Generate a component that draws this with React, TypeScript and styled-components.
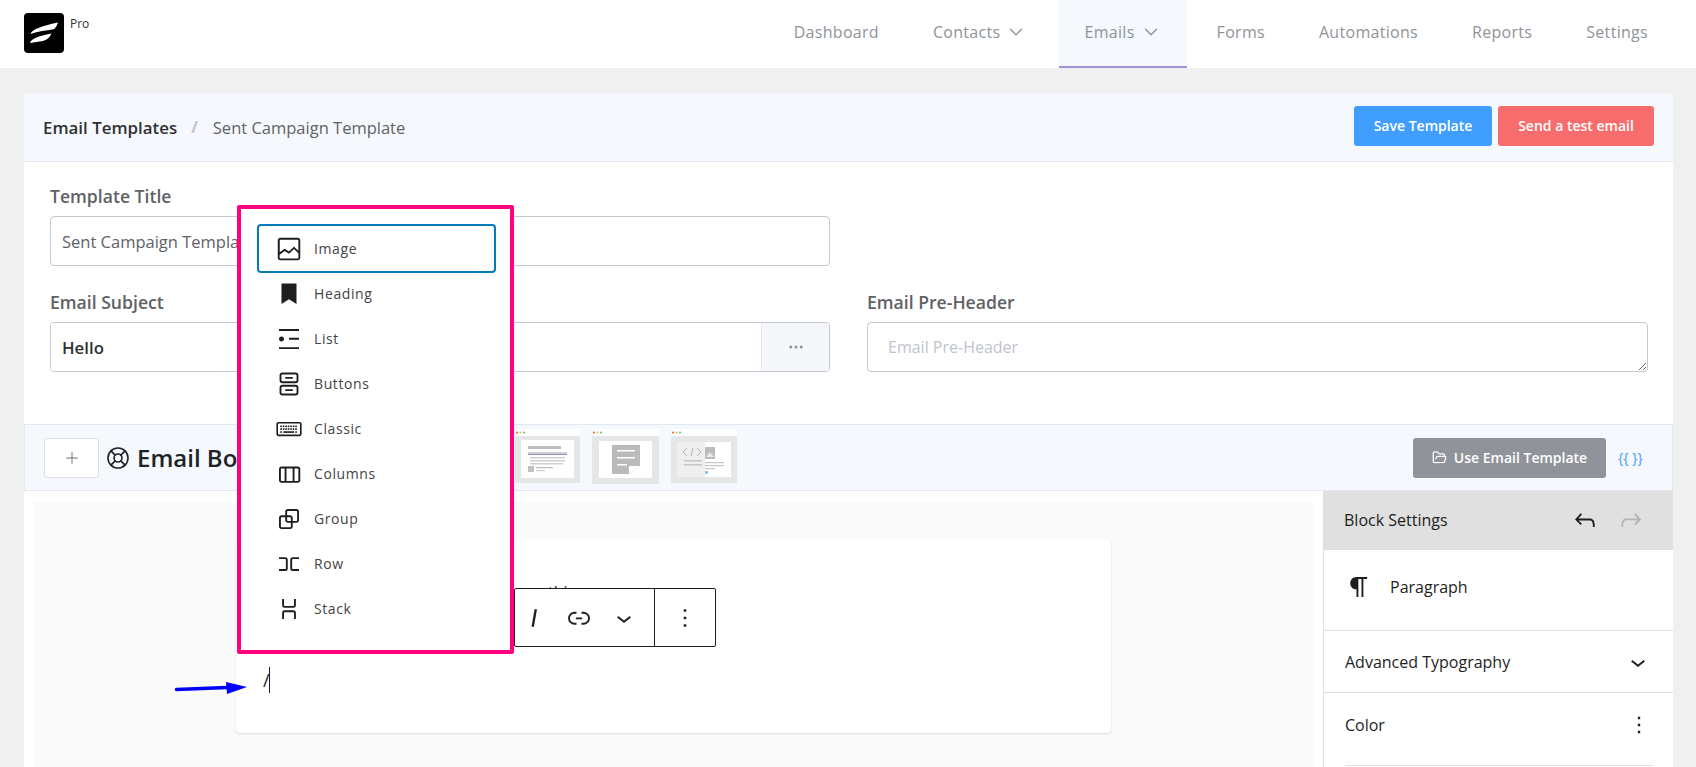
import React from "react";
import styled, { createGlobalStyle } from "styled-components";
import { ChevronDown, LifeBuoy, FolderOpen, MoreHorizontal, Plus } from "lucide-react";

const Global = createGlobalStyle`
  html, body { margin: 0; padding: 0; background: #f0f0f0; }
  * { box-sizing: border-box; }
  body { font-family: "Open Sans", "Noto Sans", "Liberation Sans", sans-serif; }
`;

const Page = styled.div`
  position: relative;
  width: 1696px;
  height: 767px;
  overflow: hidden;
  background: #f0f0f0;
`;

const Nav = styled.header`
  height: 68px;
  background: #fff;
  display: flex;
  justify-content: space-between;
  padding-left: 24px;
`;

const Brand = styled.div`
  display: flex;
  align-items: flex-start;
  padding-top: 13px;
  gap: 6px;
`;

const ProTag = styled.span`
  font-size: 12px;
  line-height: 22px;
  color: #303133;
`;

const Menu = styled.nav`
  display: flex;
  padding-right: 21px;
`;

const MenuItem = styled.a<{ $active?: boolean; $hasCaret?: boolean }>`
  height: 68px;
  display: flex;
  align-items: center;
  gap: 5px;
  font-size: 16px;
  letter-spacing: 0.3px;
  color: #909399;
  padding: 0 ${(p) => (p.$active ? "25px" : "27px")} 2px ${(p) => (p.$active ? "25px" : p.$hasCaret ? "26px" : "27px")};
  margin: 0 ${(p) => (p.$hasCaret ? (p.$active ? "3px" : "5px") : "0")} 0 ${(p) => (p.$hasCaret && !p.$active ? "1px" : "0")};
  background: ${(p) => (p.$active ? "#f5f9fd" : "transparent")};
  border-bottom: 2px solid ${(p) => (p.$active ? "#a293db" : "transparent")};
`;

const Main = styled.main`
  padding: 25px 23px 0 24px;
`;

const Panel = styled.section`
  background: #fff;
  width: 1649px;
`;

const PanelHeader = styled.div`
  height: 69px;
  background: #f5f9fd;
  border-bottom: 1px solid #e3e8ee;
  display: flex;
  align-items: center;
  justify-content: space-between;
  padding: 0 19px 0 19px;
`;

const Crumbs = styled.div`
  display: flex;
  align-items: center;
`;

const CrumbRoot = styled.strong`
  font-size: 16.9px;
  font-weight: 600;
  color: #303133;
`;

const CrumbSep = styled.span`
  color: #c0c4cc;
  font-size: 16px;
  font-weight: 700;
  margin: 0 15px 0 14px;
`;

const CrumbLeaf = styled.span`
  font-size: 16.5px;
  color: #606266;
`;

const HeaderActions = styled.div`
  display: flex;
  gap: 6px;
  margin-top: -2px;
`;

const ActionButton = styled.button<{ $bg: string; $w: number }>`
  height: 40px;
  width: ${(p) => p.$w}px;
  border: 0;
  border-radius: 3px;
  background: ${(p) => p.$bg};
  color: #fff;
  font: 600 14px "Open Sans", sans-serif;
  padding: 0 0 2px;
`;

const Form = styled.div`
  height: 262px;
  padding: 22px 25px 0 26px;
  display: grid;
  grid-template-columns: 780px 781px;
  column-gap: 37px;
  grid-auto-rows: 82px;
  row-gap: 24px;
`;

const Field = styled.div`
  display: flex;
  flex-direction: column;
`;

const FieldLabel = styled.label`
  font-size: 17.6px;
  font-weight: 600;
  line-height: 24px;
  color: #606266;
  margin-bottom: 8px;
`;

const TitleInput = styled.input`
  height: 50px;
  border: 1px solid #c4c8d0;
  border-radius: 4px;
  padding: 0 11px;
  font: 16.5px "Open Sans", sans-serif;
  color: #606266;
  width: 100%;
`;

const SubjectGroup = styled.div`
  height: 50px;
  flex: none;
  display: flex;
  border: 1px solid #c4c8d0;
  border-radius: 4px;
  overflow: hidden;
`;

const SubjectInput = styled.input`
  flex: 1;
  min-width: 0;
  border: 0;
  padding: 0 11px;
  font: 600 16.8px "Open Sans", sans-serif;
  color: #303133;
`;

const SubjectMore = styled.div`
  width: 68px;
  background: #f5f7fa;
  border-left: 1px solid #e3e8ee;
  display: flex;
  align-items: center;
  justify-content: center;
  color: #909399;
`;

const PreHeader = styled.textarea`
  height: 50px;
  flex: none;
  border: 1px solid #c4c8d0;
  border-radius: 4px;
  padding: 13px 20px;
  font: 16px "Open Sans", sans-serif;
  color: #606266;
  &::placeholder { color: #c0c4cc; opacity: 1; }
`;

const Toolbar = styled.div`
  height: 67px;
  background: #f5f9fd;
  border: 1px solid #e3e8ee;
  display: flex;
  align-items: center;
  justify-content: space-between;
  padding: 0 30px 0 19px;
`;

const ToolbarLeft = styled.div`
  display: flex;
  align-items: center;
`;

const AddButton = styled.button`
  width: 55px;
  height: 40px;
  background: #fff;
  border: 1px solid #dcdfe6;
  border-radius: 3px;
  color: #606266;
  display: flex;
  align-items: center;
  justify-content: center;
  padding: 0;
  margin-right: 7px;
`;

const BodyTitle = styled.h2`
  margin: 0 0 0 7px;
  width: 378px;
  font-size: 24px;
  font-weight: 600;
  color: #1d2327;
  white-space: nowrap;
`;

const Thumbs = styled.div`
  display: flex;
  gap: 12px;
  margin-top: -2px;
`;

const ToolbarRight = styled.div`
  display: flex;
  align-items: center;
  gap: 12px;
`;

const TemplateButton = styled.button`
  width: 193px;
  height: 40px;
  background: #909399;
  color: #fff;
  border: 0;
  border-radius: 3px;
  font: 600 14px "Open Sans", sans-serif;
  display: flex;
  align-items: center;
  justify-content: center;
  gap: 7px;
  padding: 0;
`;

const Smart = styled.span`
  color: #409eff;
  font-size: 14px;
  width: 24px;
  white-space: nowrap;
`;

const Workspace = styled.div`
  display: flex;
  height: 276px;
`;

const CanvasArea = styled.div`
  width: 1299px;
  padding: 11px 10px 0;
`;

const Canvas = styled.div`
  height: 265px;
  background: #fafafa;
  padding-top: 37px;
  display: flex;
  justify-content: center;
`;

const EmailCard = styled.div`
  width: 875px;
  height: 194px;
  background: #fff;
  border-radius: 4px;
  box-shadow: 0 1px 2px rgba(0, 0, 0, 0.12);
  padding: 40px 27px 0;
`;

const BehindLine = styled.p`
  margin: 0;
  font-size: 16px;
  line-height: 26px;
  text-indent: 285px;
  color: #1e1e1e;
`;

const SlashLine = styled.p`
  margin: 62px 0 0;
  font-size: 18px;
  line-height: 26px;
  color: #1e1e1e;
  display: flex;
`;

const Caret = styled.span`
  width: 1px;
  height: 26px;
  background: #1e1e1e;
  margin-left: -1px;
`;

const Sidebar = styled.aside`
  width: 350px;
  border-left: 1px solid #e0e0e0;
  background: #fff;
`;

const SideHead = styled.div`
  height: 59px;
  background: #e0e0e0;
  display: flex;
  align-items: center;
  padding: 0 27px 2px 20px;
  font-size: 16px;
  font-weight: 500;
  color: #1e1e1e;
`;

const SideHeadTitle = styled.span`
  flex: 1;
`;

const History = styled.div`
  display: flex;
  gap: 16px;
`;

const BlockCard = styled.div`
  height: 81px;
  border-bottom: 1px solid #e0e0e0;
  display: flex;
  align-items: flex-start;
  padding: 22px 0 0 20px;
  gap: 16px;
  font-size: 16px;
  font-weight: 500;
  color: #1e1e1e;
`;

const BlockName = styled.span`
  line-height: 30px;
`;

const SideRow = styled.div`
  height: 62px;
  padding: 1px 20px 0 21px;
  display: flex;
  align-items: center;
  justify-content: space-between;
  border-bottom: 1px solid #e0e0e0;
  font-size: 16px;
  font-weight: 500;
  color: #1e1e1e;
`;

const ColorRow = styled(SideRow)`
  height: 73px;
  margin: 0 20px 0 21px;
  padding: 0 0 9px 0;
  border-bottom: 1px solid #e0e0e0;
`;

const Inserter = styled.div`
  position: absolute;
  left: 237px;
  top: 205px;
  width: 277px;
  height: 449px;
  background: #fff;
  border: 4px solid #ff0080;
  border-radius: 2px;
  padding: 17px 16px 0 18px;
  z-index: 3;
`;

const InsertItem = styled.div<{ $focus?: boolean }>`
  height: 45px;
  display: flex;
  align-items: center;
  gap: 10px;
  padding-left: 15px;
  font-size: 14px;
  letter-spacing: 0.6px;
  color: #444;
  border-radius: 2px;
  box-shadow: ${(p) => (p.$focus ? "0 0 0 2px #007cba" : "none")};
`;

const FloatBar = styled.div`
  position: absolute;
  left: 514px;
  top: 588px;
  width: 202px;
  height: 59px;
  background: #fff;
  border: 1px solid #1e1e1e;
  border-radius: 2px;
  display: flex;
  align-items: center;
  z-index: 2;
`;

const FloatTools = styled.div`
  width: 140px;
  display: flex;
  align-items: center;
  padding-left: 4px;
  gap: 15px;
  height: 100%;
  border-right: 1px solid #1e1e1e;
`;

const FloatMore = styled.div`
  flex: 1;
  display: flex;
  justify-content: center;
`;

const ArrowMark = styled.svg`
  position: absolute;
  left: 171px;
  top: 676px;
  z-index: 2;
`;

const Wp = ({ d, size = 24, color = "#1e1e1e" }: { d: string; size?: number; color?: string }) => (
  <svg width={size} height={size} viewBox="0 0 24 24" fill={color} style={{ flex: "none" }}>
    <path d={d} />
  </svg>
);

const Keyboard = () => (
  <svg width={30} height={30} viewBox="0 0 24 24" fill="#1e1e1e" style={{ flex: "none" }}>
    <path d="M3.6 6.3h16.8c1 0 1.7.7 1.7 1.7v8c0 1-.7 1.7-1.7 1.7H3.6c-1 0-1.7-.7-1.7-1.7V8c0-1 .7-1.7 1.7-1.7Zm0 1.3c-.2 0-.4.2-.4.4v8c0 .2.2.4.4.4h16.8c.2 0 .4-.2.4-.4V8c0-.2-.2-.4-.4-.4H3.6Z" />
    {[5, 7, 9, 11, 13, 15, 17].map((x) => (
      <rect key={x} x={x} y={9.2} width={1.3} height={1.3} />
    ))}
    {[5, 7, 9, 11, 13, 15, 17].map((x) => (
      <rect key={x} x={x} y={11.4} width={1.3} height={1.3} />
    ))}
    <rect x={5} y={13.8} width={1.3} height={1.3} />
    <rect x={7.5} y={13.8} width={8.5} height={1.3} />
    <rect x={17} y={13.8} width={1.3} height={1.3} />
  </svg>
);

const ButtonsIcon = () => (
  <svg width={30} height={30} viewBox="0 0 24 24" fill="none" stroke="#1e1e1e" strokeWidth={1.5} style={{ flex: "none" }}>
    <rect x="5.2" y="3.6" width="13.6" height="7" rx="1.6" />
    <rect x="5.2" y="13.4" width="13.6" height="7" rx="1.6" />
    <path d="M9 7.1h6M9 16.9h6" />
  </svg>
);

const ICONS = {
  image:
    "M19 3H5c-1.1 0-2 .9-2 2v14c0 1.1.9 2 2 2h14c1.1 0 2-.9 2-2V5c0-1.1-.9-2-2-2zM5 4.5h14c.3 0 .5.2.5.5v8.4l-3-2.9c-.3-.3-.8-.3-1 0L11.9 14 9 12c-.3-.2-.6-.2-.8 0l-3.6 2.6V5c-.1-.3.1-.5.4-.5zm14 15H5c-.3 0-.5-.2-.5-.5v-2.4l4.1-3 3 1.9c.3.2.7.2.9-.1L16 12l3.5 3.4V19c0 .3-.2.5-.5.5z",
  bookmark: "M6 3.5h12v16.5l-6-3.9-6 3.9z",
  list: "M4 4v1.5h16V4H4zm8 8.5h8V11h-8v1.5zM4 20h16v-1.5H4V20zm4-8c0-1.1-.9-2-2-2s-2 .9-2 2 .9 2 2 2 2-.9 2-2z",
  columns:
    "M19 6H6c-1.1 0-2 .9-2 2v9c0 1.1.9 2 2 2h13c1.1 0 2-.9 2-2V8c0-1.1-.9-2-2-2zm-4.1 1.5v10H10v-10h4.9zM5.5 17V8c0-.3.2-.5.5-.5h2.5v10H6c-.3 0-.5-.2-.5-.5zm14 0c0 .3-.2.5-.5.5h-2.6v-10H19c.3 0 .5.2.5.5v9z",
  group:
    "M18 4h-7c-1.1 0-2 .9-2 2v3H6c-1.1 0-2 .9-2 2v7c0 1.1.9 2 2 2h7c1.1 0 2-.9 2-2v-3h3c1.1 0 2-.9 2-2V6c0-1.1-.9-2-2-2zm-4.5 14c0 .3-.2.5-.5.5H6c-.3 0-.5-.2-.5-.5v-7c0-.3.2-.5.5-.5h3V13c0 1.1.9 2 2 2h2.5v3zm0-4.5H11c-.3 0-.5-.2-.5-.5v-2.5H13c.3 0 .5.2.5.5v2.5zm5-.5c0 .3-.2.5-.5.5h-3V11c0-1.1-.9-2-2-2h-2.5V6c0-.3.2-.5.5-.5h7c.3 0 .5.2.5.5v7z",
  row: "M4 6.5h5a2 2 0 0 1 2 2v7a2 2 0 0 1-2 2H4V16h5a.5.5 0 0 0 .5-.5v-7A.5.5 0 0 0 9 8H4V6.5Zm16 0h-5a2 2 0 0 0-2 2v7a2 2 0 0 0 2 2h5V16h-5a.5.5 0 0 1-.5-.5v-7A.5.5 0 0 1 15 8h5V6.5Z",
  stack:
    "M17.5 4v5a2 2 0 0 1-2 2h-7a2 2 0 0 1-2-2V4H8v5a.5.5 0 0 0 .5.5h7A.5.5 0 0 0 16 9V4h1.5Zm0 16v-5a2 2 0 0 0-2-2h-7a2 2 0 0 0-2 2v5H8v-5a.5.5 0 0 1 .5-.5h7a.5.5 0 0 1 .5.5v5h1.5Z",
  link: "M10 17.389H8.444A5.194 5.194 0 1 1 8.444 7H10v1.5H8.444a3.694 3.694 0 0 0 0 7.389H10v1.5ZM14 7h1.556a5.194 5.194 0 0 1 0 10.39H14v-1.5h1.556a3.694 3.694 0 0 0 0-7.39H14V7Zm-4.5 6h5v-1.5h-5V13Z",
  undo: "M18.3 11.7c-.6-.6-1.4-.9-2.3-.9H6.7l2.9-3.3-1.1-1-4.5 5L8.5 16l1-1-2.7-2.7H16c.5 0 .9.2 1.3.5 1 1 1 3.4 1 4.5v.3h1.5v-.2c0-1.5 0-4.3-1.5-5.7z",
  redo: "M15.6 6.5l-1.1 1 2.9 3.3H8c-.9 0-1.7.3-2.3.9-1.4 1.5-1.4 4.2-1.4 5.6v.2h1.5v-.3c0-1.1 0-3.5 1-4.5.3-.3.7-.5 1.3-.5h9.2L14.5 15l1.1 1.1 4.6-4.6-4.6-5z",
  pilcrow:
    "m9.99609 14v-.2251l.00391.0001v6.225h1.5v-14.5h2.5v14.5h1.5v-14.5h3v-1.5h-8.50391c-2.76142 0-5 2.23858-5 5 0 2.7614 2.23858 5 5 5z",
  dots: "M13 19h-2v-2h2v2zm0-6h-2v-2h2v2zm0-6h-2V5h2v2z",
  chevron: "M17.5 11.6L12 16l-5.5-4.4.9-1.2L12 14l4.5-3.6 1 1.2z",
  italic: "M12.5 5L10 19h1.9l2.5-14z",
};

const Logo = () => (
  <svg width="40" height="40" viewBox="0 0 40 40">
    <rect width="40" height="40" rx="4" fill="#000" />
    <path d="M6.5 21C8 16.5 17 13 34 9.5c-1.5 4-2.500 6-4.500 6.800C22 17.500 14 18.500 6.500 21Z" fill="#fff" />
    <path d="M6 30c.8-4 8-7 21.500-9.500-2.500 5-5 6.500-8.500 7.500-4 .8-8.500 1-13 2Z" fill="#fff" />
  </svg>
);

const ThumbBase = ({ w, h, children }: { w: number; h: number; children: React.ReactNode }) => (
  <svg width={w} height={h} viewBox={`0 0 ${w} ${h}`}>
    <rect width={w} height="7" fill="#fff" />
    <circle cx="2" cy="3.500" r="1.100" fill="#f0642c" />
    <circle cx="5.500" cy="3.500" r="1.100" fill="#f5b93c" />
    <circle cx="9" cy="3.500" r="1.100" fill="#3bd6a0" />
    <rect y="7" width={w} height={h - 7} fill="#e6e6e6" />
    {children}
  </svg>
);

const Thumb1 = () => (
  <ThumbBase w={65} h={54}>
    <rect x="6" y="11" width="53" height="38" fill="#fff" />
    <rect x="13" y="17" width="33" height="3" fill="#bdbdbd" />
    <rect x="13" y="23" width="39" height="2" fill="#d0d0d0" />
    <rect x="13" y="25" width="39" height="1" fill="#8f8fc8" />
    <rect x="15" y="28" width="35" height="1.500" fill="#cfcfcf" />
    <rect x="15" y="31" width="35" height="1.500" fill="#cfcfcf" />
    <rect x="15" y="34" width="33" height="1.500" fill="#cfcfcf" />
    <rect x="13" y="37" width="6" height="6" fill="#c2c2c2" />
    <rect x="21" y="38" width="17" height="1.200" fill="#bdbdbd" />
    <rect x="21" y="41" width="9" height="1.200" fill="#cfcfcf" />
  </ThumbBase>
);

const Thumb2 = () => (
  <ThumbBase w={67} h={55}>
    <rect x="7" y="12" width="53" height="37" fill="#fff" />
    <path d="M20 16h28v21l-11 8H20Z" fill="#bababa" />
    <path d="M37 45l11-8h-11Z" fill="#fff" />
    <rect x="25" y="21" width="18" height="1.500" fill="#fff" />
    <rect x="25" y="28" width="18" height="1.500" fill="#fff" />
    <rect x="25" y="35" width="10" height="1.500" fill="#fff" />
  </ThumbBase>
);

const Thumb3 = () => (
  <ThumbBase w={66} h={54}>
    <rect x="6" y="13" width="54" height="35" fill="#fff" />
    <rect x="6" y="13" width="28" height="35" fill="#efefef" />
    <path d="M16 19l-4 4 4 4M22 19l-2 8M26 19l4 4-4 4" stroke="#b5b5b5" strokeWidth="1" fill="none" />
    <rect x="13" y="31" width="18" height="1.500" fill="#c6c6c6" />
    <rect x="13" y="35" width="18" height="1.500" fill="#c6c6c6" />
    <rect x="34" y="18" width="10" height="12" fill="#bcbcbc" />
    <path d="M35 28l4-5 4 5Z" fill="#e8e8e8" />
    <rect x="34" y="33" width="19" height="1.200" fill="#c6c6c6" />
    <rect x="34" y="36" width="19" height="1.200" fill="#c6c6c6" />
    <rect x="34" y="39" width="10" height="1.200" fill="#c6c6c6" />
    <rect x="34" y="42" width="3" height="3" fill="#8fc4ea" />
  </ThumbBase>
);

const inserterItems: { label: string; icon: React.ReactNode }[] = [
  { label: "Image", icon: <Wp d={ICONS.image} size={30} /> },
  { label: "Heading", icon: <Wp d={ICONS.bookmark} size={30} /> },
  { label: "List", icon: <Wp d={ICONS.list} size={30} /> },
  { label: "Buttons", icon: <ButtonsIcon /> },
  { label: "Classic", icon: <Keyboard /> },
  { label: "Columns", icon: <Wp d={ICONS.columns} size={30} /> },
  { label: "Group", icon: <Wp d={ICONS.group} size={30} /> },
  { label: "Row", icon: <Wp d={ICONS.row} size={30} /> },
  { label: "Stack", icon: <Wp d={ICONS.stack} size={30} /> },
];

export default function App() {
  return (
    <Page>
      <Global />
      <Nav>
        <Brand>
          <Logo />
          <ProTag>Pro</ProTag>
        </Brand>
        <Menu>
          <MenuItem>Dashboard</MenuItem>
          <MenuItem $hasCaret>
            Contacts <ChevronDown size={22} strokeWidth={1.5} />
          </MenuItem>
          <MenuItem $active $hasCaret>
            Emails <ChevronDown size={22} strokeWidth={1.5} />
          </MenuItem>
          <MenuItem>Forms</MenuItem>
          <MenuItem>Automations</MenuItem>
          <MenuItem>Reports</MenuItem>
          <MenuItem>Settings</MenuItem>
        </Menu>
      </Nav>
      <Main>
        <Panel>
          <PanelHeader>
            <Crumbs>
              <CrumbRoot>Email Templates</CrumbRoot>
              <CrumbSep>/</CrumbSep>
              <CrumbLeaf>Sent Campaign Template</CrumbLeaf>
            </Crumbs>
            <HeaderActions>
              <ActionButton $bg="#409eff" $w={138}>Save Template</ActionButton>
              <ActionButton $bg="#f76c6c" $w={156}>Send a test email</ActionButton>
            </HeaderActions>
          </PanelHeader>
          <Form>
            <Field>
              <FieldLabel>Template Title</FieldLabel>
              <TitleInput readOnly value="Sent Campaign Template" />
            </Field>
            <div />
            <Field>
              <FieldLabel>Email Subject</FieldLabel>
              <SubjectGroup>
                <SubjectInput readOnly value="Hello" />
                <SubjectMore>
                  <MoreHorizontal size={18} />
                </SubjectMore>
              </SubjectGroup>
            </Field>
            <Field>
              <FieldLabel>Email Pre-Header</FieldLabel>
              <PreHeader placeholder="Email Pre-Header" />
            </Field>
          </Form>
          <Toolbar>
            <ToolbarLeft>
              <AddButton>
                <Plus size={18} strokeWidth={1.2} />
              </AddButton>
              <LifeBuoy size={24} color="#1d2327" strokeWidth={1.6} />
              <BodyTitle>Email Body</BodyTitle>
              <Thumbs>
                <Thumb1 />
                <Thumb2 />
                <Thumb3 />
              </Thumbs>
            </ToolbarLeft>
            <ToolbarRight>
              <TemplateButton>
                <FolderOpen size={15} />
                Use Email Template
              </TemplateButton>
              <Smart>{"{{ }}"}</Smart>
            </ToolbarRight>
          </Toolbar>
          <Workspace>
            <CanvasArea>
              <Canvas>
                <EmailCard>
                  <BehindLine>this</BehindLine>
                  <SlashLine>
                    /<Caret />
                  </SlashLine>
                </EmailCard>
              </Canvas>
            </CanvasArea>
            <Sidebar>
              <SideHead>
                <SideHeadTitle>Block Settings</SideHeadTitle>
                <History>
                  <Wp d={ICONS.undo} size={30} />
                  <Wp d={ICONS.redo} size={30} color="#b4b4b4" />
                </History>
              </SideHead>
              <BlockCard>
                <Wp d={ICONS.pilcrow} size={30} />
                <BlockName>Paragraph</BlockName>
              </BlockCard>
              <SideRow>
                Advanced Typography
                <Wp d={ICONS.chevron} size={30} />
              </SideRow>
              <ColorRow>
                Color
                <Wp d={ICONS.dots} size={28} />
              </ColorRow>
            </Sidebar>
          </Workspace>
        </Panel>
      </Main>
      <Inserter>
        {inserterItems.map((item, i) => (
          <InsertItem key={item.label} $focus={i === 0}>
            {item.icon}
            {item.label}
          </InsertItem>
        ))}
      </Inserter>
      <FloatBar>
        <FloatTools>
          <Wp d={ICONS.italic} size={30} />
          <Wp d={ICONS.link} size={30} />
          <Wp d={ICONS.chevron} size={30} />
        </FloatTools>
        <FloatMore>
          <Wp d={ICONS.dots} size={30} />
        </FloatMore>
      </FloatBar>
      <ArrowMark width="80" height="24" viewBox="0 0 80 24">
        <path d="M5.500 13.500 L56 11.500" stroke="#0000ff" strokeWidth="3.500" strokeLinecap="round" />
        <path d="M55 6 L76 11 L56 18 Z" fill="#0000ff" />
      </ArrowMark>
    </Page>
  );
}
